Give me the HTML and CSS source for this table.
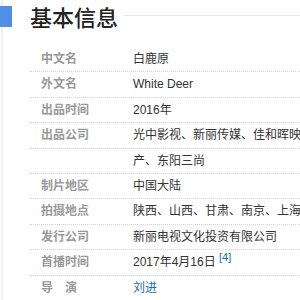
FILE: index.html
```html
<!DOCTYPE html>
<html>
<head>
<meta charset="utf-8">
<link rel="stylesheet" href="styles.css">
</head>
<body>
<div class="page">
  <div class="title">
    <span class="bar"></span>
    <h2 class="title-text">基本信息</h2>
    <span class="rule"></span>
  </div>
  <div class="list">
    <div class="row"><span class="label">中文名</span><span class="value">白鹿原</span></div>
    <div class="row"><span class="label">外文名</span><span class="value">White Deer</span></div>
    <div class="row"><span class="label">出品时间</span><span class="value">2016年</span></div>
    <div class="row"><span class="label">出品公司</span><span class="value">光中影视、新丽传媒、佳和晖映</span></div>
    <div class="row"><span class="label"></span><span class="value">产、东阳三尚</span></div>
    <div class="row"><span class="label">制片地区</span><span class="value">中国大陆</span></div>
    <div class="row"><span class="label">拍摄地点</span><span class="value">陕西、山西、甘肃、南京、上海</span></div>
    <div class="row"><span class="label">发行公司</span><span class="value">新丽电视文化投资有限公司</span></div>
    <div class="row"><span class="label">首播时间</span><span class="value">2017年4月16日 <sup class="ref">[4]</sup></span></div>
    <div class="row"><span class="label">导　演</span><span class="value"><a class="link">刘进</a></span></div>
  </div>
</div>
</body>
</html>
```
FILE: styles.css
```css
html, body {
  margin: 0;
  padding: 0;
  background: #fff;
}
body {
  width: 300px;
  height: 300px;
  overflow: hidden;
  font-family: "Liberation Sans", "Noto Sans CJK SC", sans-serif;
}
.page {
  border-left: 2px solid #f0f0f0;
  margin-left: 1px;
  height: 300px;
}
.title {
  display: flex;
  align-items: center;
  height: 32px;
  margin-left: -3px;
}
.bar {
  width: 12px;
  height: 21px;
  background: #4f8fe6;
  flex: none;
}
.title-text {
  margin: 0 0 0 18px;
  font-family: "Noto Sans CJK SC", sans-serif;
  font-size: 22px;
  font-weight: 500;
  color: #222;
  line-height: 32px;
}
.rule {
  flex: 1;
  height: 1px;
  background: #e6e6e6;
  margin-left: 6px;
  margin-bottom: 1px;
}
.list {
  margin-left: 27px;
  margin-top: 15px;
}
.row {
  display: flex;
  line-height: 24.4px;
  height: 24.4px;
  border-bottom: 1px dotted #d4d4d4;
  font-size: 12px;
  white-space: nowrap;
}
.label {
  width: 92px;
  padding-left: 11px;
  flex: none;
  color: #999;
  font-weight: 700;
}
.value {
  color: #333;
}
.ref {
  color: #136ec2;
  font-size: 11px;
  line-height: 0;
  vertical-align: 5px;
}
.link {
  color: #136ec2;
  text-decoration: none;
}
```
